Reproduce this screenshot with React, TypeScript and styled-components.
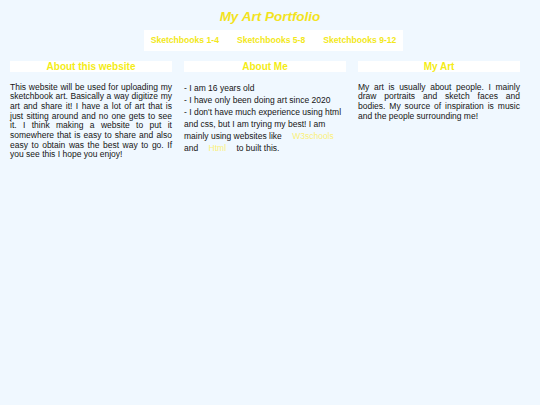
import React from "react";
import styled, { createGlobalStyle } from "styled-components";

const Global = createGlobalStyle`
  html, body {
    margin: 0;
    padding: 0;
    background: #f0f8ff;
    font-family: "Liberation Sans", Arial, sans-serif;
  }
`;

const Page = styled.div`
  width: 540px;
  min-height: 405px;
  background: #f0f8ff;
  display: flex;
  flex-direction: column;
  align-items: stretch;
`;

const Title = styled.h1`
  margin: 0;
  padding-top: 8.5px;
  font-size: 13.5px;
  line-height: 16px;
  font-weight: bold;
  font-style: italic;
  color: #f3e31e;
  text-align: center;
`;

const Nav = styled.nav`
  align-self: center;
  margin-top: 5px;
  margin-left: 7px;
  height: 21.5px;
  padding: 0 7px;
  background: #ffffff;
  display: flex;
  align-items: center;
  gap: 18px;
`;

const NavLink = styled.a`
  font-size: 8.6px;
  font-weight: bold;
  color: #f2e81a;
  text-decoration: none;
`;

const Columns = styled.main`
  margin-top: 9.5px;
  padding-left: 10px;
  display: grid;
  grid-template-columns: 162px 162px 162px;
  column-gap: 12px;
`;

const Column = styled.section`
  display: flex;
  flex-direction: column;
`;

const Heading = styled.h2`
  margin: 0;
  height: 11.5px;
  background: #ffffff;
  font-size: 10px;
  line-height: 11.5px;
  font-weight: bold;
  color: #f4ec15;
  text-align: center;
`;

const Text = styled.p<{ $justify?: boolean; $gap: number; $lh: number }>`
  margin: ${(p) => p.$gap}px 0 0;
  font-size: 8.5px;
  line-height: ${(p) => p.$lh}px;
  color: #151515;
  text-align: ${(p) => (p.$justify ? "justify" : "left")};
`;

const InlineLink = styled.a`
  color: #fbf07a;
  text-decoration: none;
  padding: 0 8px;
`;

export default function App() {
  return (
    <>
      <Global />
      <Page>
        <Title>My Art Portfolio</Title>
        <Nav>
          <NavLink href="#">Sketchbooks 1-4</NavLink>
          <NavLink href="#">Sketchbooks 5-8</NavLink>
          <NavLink href="#">Sketchbooks 9-12</NavLink>
        </Nav>
        <Columns>
          <Column>
            <Heading>About this website</Heading>
            <Text $justify $gap={10.5} $lh={9.7}>
              This website will be used for uploading my sketchbook art.
              Basically a way digitize my art and share it! I have a lot of
              art that is just sitting around and no one gets to see it. I
              think making a website to put it somewhere that is easy to share
              and also easy to obtain was the best way to go. If you see this
              I hope you enjoy!
            </Text>
          </Column>
          <Column>
            <Heading>About Me</Heading>
            <Text $gap={9.5} $lh={12}>
              - I am 16 years old
              <br />- I have only been doing art since 2020
              <br />- I don't have much experience using html and css, but I
              am trying my best! I am mainly using websites like{" "}
              <InlineLink href="#">W3schools</InlineLink> and{" "}
              <InlineLink href="#">Html</InlineLink> to built this.
            </Text>
          </Column>
          <Column>
            <Heading>My Art</Heading>
            <Text $justify $gap={10.5} $lh={9.7}>
              My art is usually about people. I mainly draw portraits and
              sketch faces and bodies. My source of inspiration is music and
              the people surrounding me!
            </Text>
          </Column>
        </Columns>
      </Page>
    </>
  );
}
